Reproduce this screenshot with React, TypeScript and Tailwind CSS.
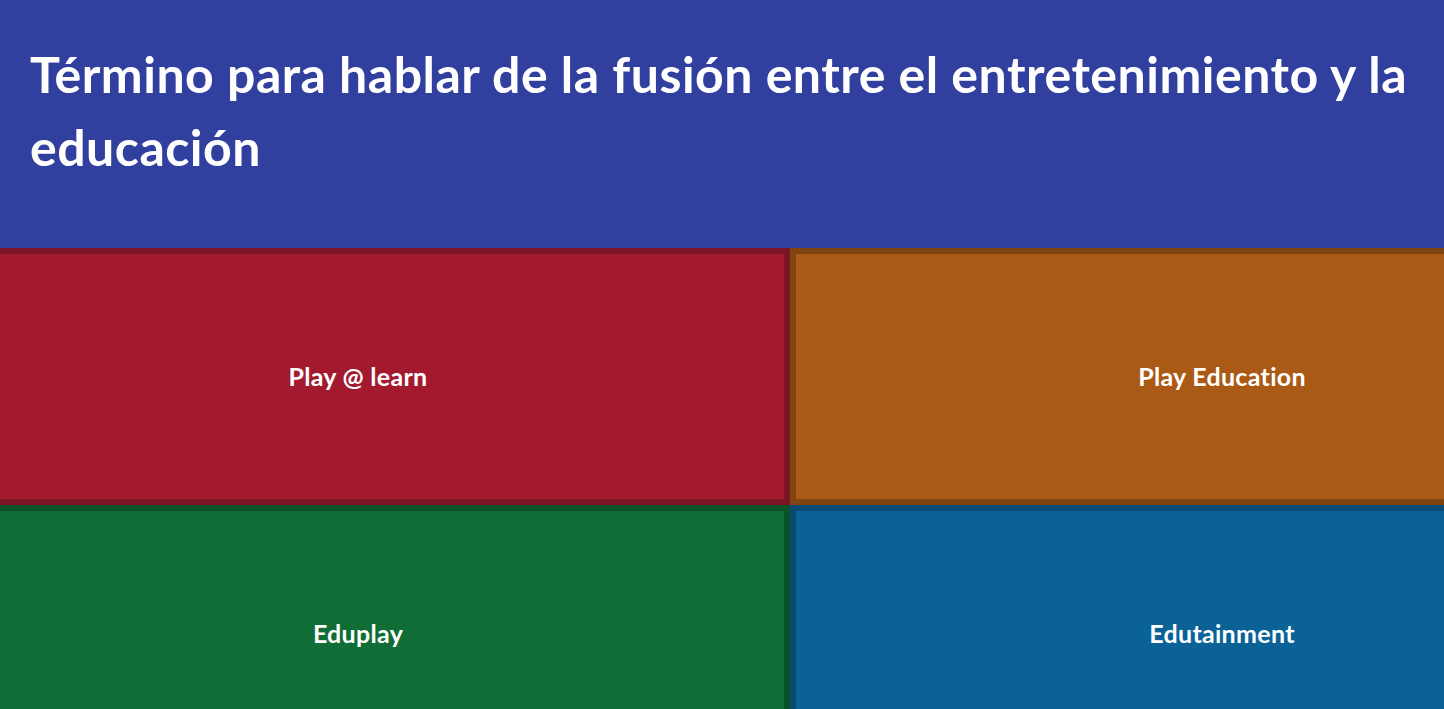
const tiles = [
  { label: 'Play @ learn', fill: 'bg-[#a31a2f]', edge: 'border-[#7b1424]' },
  { label: 'Play Education', fill: 'bg-[#aa5a15]', edge: 'border-[#804410]' },
  { label: 'Eduplay', fill: 'bg-[#0f6d35]', edge: 'border-[#0b5228]' },
  { label: 'Edutainment', fill: 'bg-[#0a6297]', edge: 'border-[#084a72]' },
];

export default function App() {
  return (
    <div className="w-[1444px] h-[709px] overflow-hidden bg-[#313f9f] font-['Lato',sans-serif] text-white">
      {/* Question header */}
      <header className="h-[248px] px-[30px] pt-[38px]">
        <h1 className="text-[50px] font-bold leading-[73px] tracking-[0.5px]">
          Término para hablar de la fusión entre el entretenimiento y la educación
        </h1>
      </header>

      {/* Answer tiles */}
      <div className="ml-[-74px] grid w-[1728px] grid-cols-2">
        {tiles.map((t) => (
          <div
            key={t.label}
            className={`h-[257px] flex items-center justify-center border-[6px] ${t.fill} ${t.edge}`}
          >
            <span className="text-[25px] font-bold tracking-[0.3px]">{t.label}</span>
          </div>
        ))}
      </div>
    </div>
  );
}
